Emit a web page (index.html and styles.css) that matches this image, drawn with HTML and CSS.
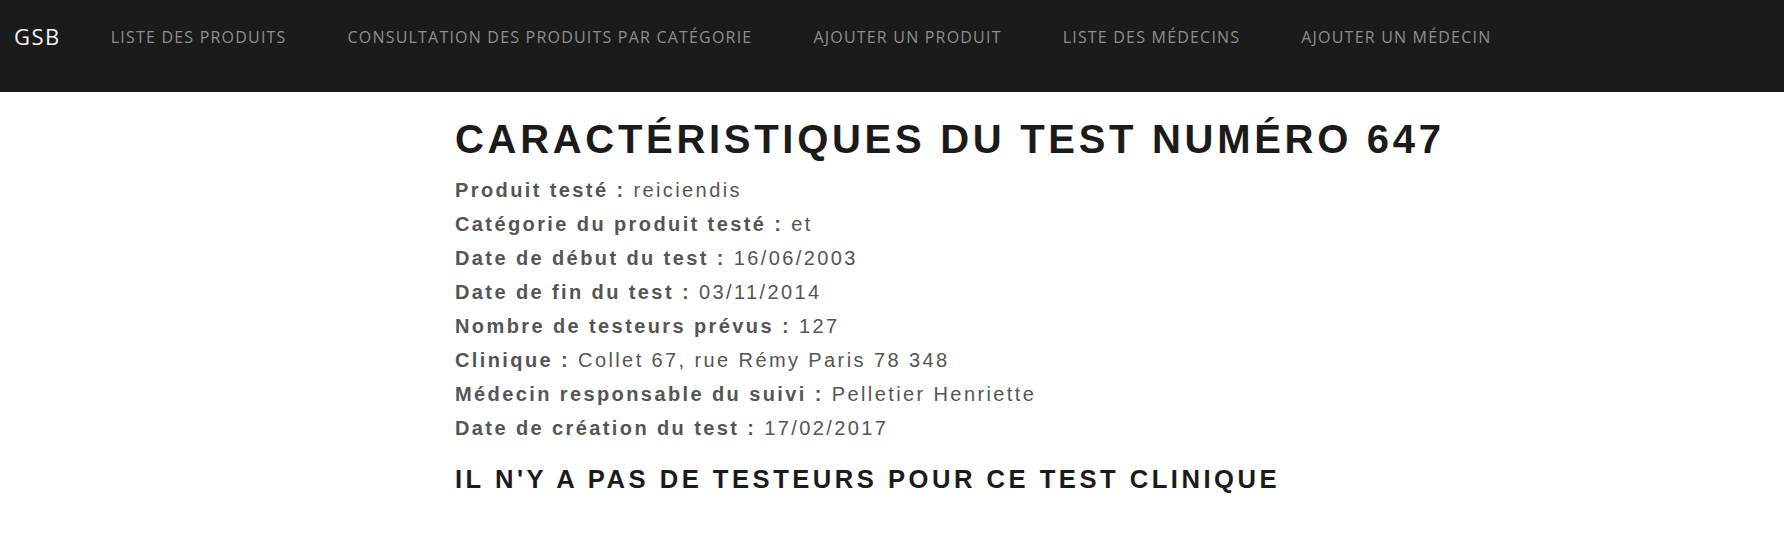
FILE: index.html
```html
<!DOCTYPE html>
<html lang="fr">
<head>
<meta charset="utf-8">
<title>GSB - Test 647</title>
<link rel="stylesheet" href="styles.css">
</head>
<body>
<nav class="navbar">
  <a class="brand" href="#">GSB</a>
  <ul class="nav-links">
    <li><a href="#">Liste des produits</a></li>
    <li><a href="#">Consultation des produits par catégorie</a></li>
    <li><a href="#">Ajouter un produit</a></li>
    <li><a href="#">Liste des médecins</a></li>
    <li><a href="#">Ajouter un médecin</a></li>
  </ul>
</nav>
<main class="content">
  <h1 class="title">Caractéristiques du test numéro 647</h1>
  <div class="details">
    <p><strong>Produit testé :</strong> reiciendis</p>
    <p><strong>Catégorie du produit testé :</strong> et</p>
    <p><strong>Date de début du test :</strong> 16/06/2003</p>
    <p><strong>Date de fin du test :</strong> 03/11/2014</p>
    <p><strong>Nombre de testeurs prévus :</strong> 127</p>
    <p><strong>Clinique :</strong> Collet 67, rue Rémy Paris 78 348</p>
    <p><strong>Médecin responsable du suivi :</strong> Pelletier Henriette</p>
    <p><strong>Date de création du test :</strong> 17/02/2017</p>
  </div>
  <h2 class="subtitle">Il n'y a pas de testeurs pour ce test clinique</h2>
</main>
</body>
</html>
```

FILE: styles.css
```css
html, body {
  margin: 0;
  padding: 0;
  background: #ffffff;
}

body {
  font-family: "Liberation Sans", Arial, sans-serif;
}

.navbar {
  height: 92px;
  background: #1b1b1b;
  display: flex;
  align-items: flex-start;
  padding: 0 0 0 14px;
  box-sizing: border-box;
}

.brand {
  font-family: "Open Sans", sans-serif;
  font-size: 22px;
  line-height: 30px;
  margin-top: 21px;
  color: #f4f4f4;
  text-decoration: none;
  margin-right: 50px;
  letter-spacing: 1.5px;
}

.nav-links {
  list-style: none;
  margin: 26px 0 0;
  padding: 0;
  display: flex;
  gap: 61px;
}

.nav-links a {
  font-family: "Open Sans", sans-serif;
  font-size: 16px;
  line-height: 22px;
  letter-spacing: 1.2px;
  text-transform: uppercase;
  color: #8e8e8e;
  text-decoration: none;
}

.content {
  padding: 23px 0 0 455px;
}

.title {
  margin: 0 0 10px;
  font-size: 40px;
  line-height: 1.2;
  font-weight: 700;
  letter-spacing: 3.7px;
  text-transform: uppercase;
  color: #1b1b1b;
}

.details p {
  margin: 0;
  font-size: 20px;
  line-height: 34px;
  letter-spacing: 2.4px;
  color: #555555;
}

.details strong {
  font-weight: 700;
}

.subtitle {
  margin: 19px 0 0;
  font-size: 25.6px;
  line-height: 1.2;
  font-weight: 700;
  letter-spacing: 3.5px;
  text-transform: uppercase;
  color: #1b1b1b;
}
```
